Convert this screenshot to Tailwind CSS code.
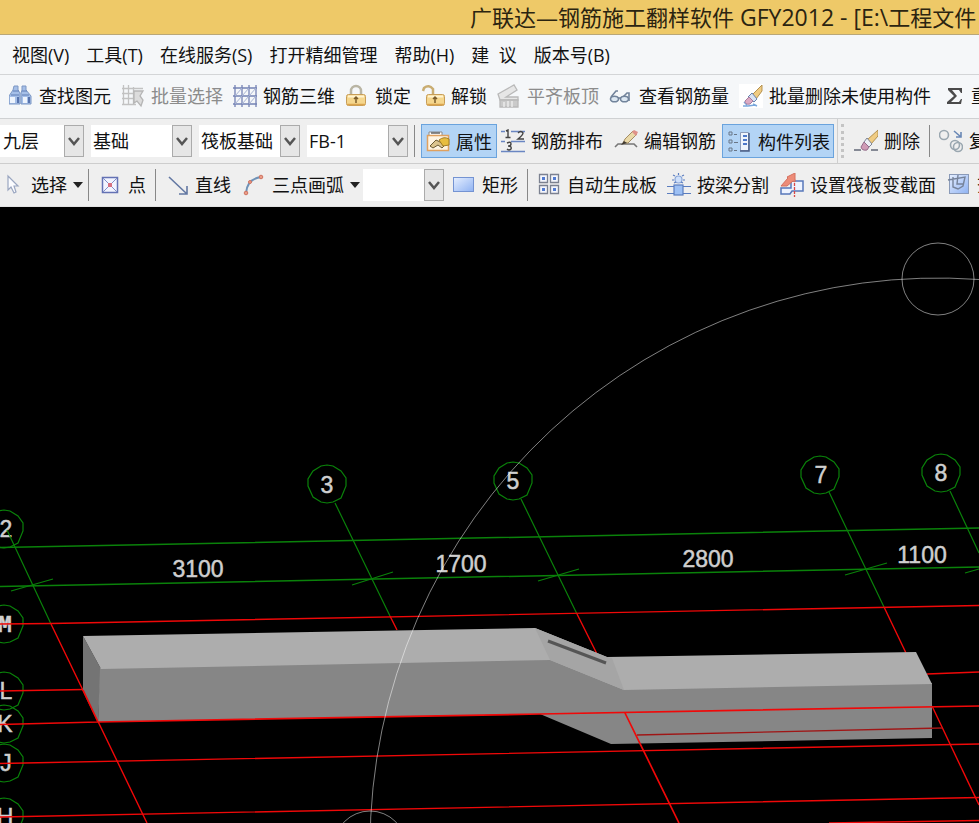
<!DOCTYPE html>
<html lang="zh-CN">

<head>
    <meta charset="utf-8">
    <title>广联达—钢筋施工翻样软件 GFY2012</title>
    <script src="https://cdn.jsdelivr.net/npm/@tailwindcss/browser@4"></script>
</head>

<body class="h-screen flex flex-col overflow-hidden bg-black text-[18px] leading-6 text-[#111] whitespace-nowrap font-['Open_Sans','Noto_Sans_CJK_SC',sans-serif]">

    <!-- title bar -->
    <header class="h-[35px] shrink-0 flex items-center pl-[470px] overflow-hidden bg-[#eec968] border-b border-[#b9a778]">
        <h1 class="text-[22px] leading-8 text-[#2b2410]">广联达—钢筋施工翻样软件<span class="text-[23px]"> GFY2012 - [E:\</span>工程文件</h1>
    </header>

    <!-- menu -->
    <nav class="h-10 shrink-0 flex items-center gap-[17px] pl-3 overflow-hidden bg-[#f5f7f9] border-b border-[#d3d5d7]">
        <button>视图(V)</button>
        <button>工具(T)</button>
        <button>在线服务(S)</button>
        <button>打开精细管理</button>
        <button>帮助(H)</button>
        <button>建&nbsp;&nbsp;议</button>
        <button>版本号(B)</button>
    </nav>

    <!-- toolbar 1 -->
    <div class="h-11 shrink-0 flex items-center gap-[10px] pl-[9px] pb-[2px] overflow-hidden bg-[#f5f7f9] border-b border-[#cfd1d3]">
        <button class="flex shrink-0 items-center gap-[6px]">
            <svg class="size-6" viewBox="0 0 24 24" stroke="#7c97c4" stroke-width="1">
                <path d="M5 2h4v4l2 3v11H0v-8l4-6z" fill="#a5bfe8" />
                <path d="M13 2h4v4l5 6v8H12V9l1-3z" fill="#a5bfe8" />
                <path d="M4 7h6M13 7h5M2 11h8M13 11h7" stroke="#5e7db4" />
                <path d="M1 13h5v6H1zM14 13h4v6h-4z" fill="#eef4fd" stroke="none" />
                <path d="M9 13v6M20 13v6" stroke="#5773ad" stroke-width="2" />
            </svg>
            <span>查找图元</span>
        </button>
        <button class="flex shrink-0 items-center gap-[6px] text-[#8c8c8c]" disabled>
            <svg class="size-6" viewBox="0 0 24 24" fill="none" stroke="#c2c2c2" stroke-width="1.300">
                <path d="M2.500 1v20M7.500 1v20M12.500 3v17M1 4.500h21M1 9.500h12M1 14.500h12M1 20.500h14" />
                <path d="M13 7h9l-3 5 3 4-2 6-4-5-3 2z" fill="#dcdcdc" stroke="#b5b5b5" />
            </svg>
            <span>批量选择</span>
        </button>
        <button class="flex shrink-0 items-center gap-[6px]">
            <svg class="size-6" viewBox="0 0 24 24" fill="none" stroke="#7382b4" stroke-width="1.300">
                <path d="M2 1v22M9 1v22M16 1v22M23 1v22M0 4h24M0 12h24M0 20h24" />
                <path d="M2 12l7-8M9 12l7-8M16 12l7-8M2 20l7-8M9 20l7-8M16 20l7-8" stroke="#a7b3d3" stroke-width="1" />
            </svg>
            <span>钢筋三维</span>
        </button>
        <button class="flex shrink-0 items-center gap-[6px]">
            <svg class="size-6" viewBox="0 0 24 24">
                <path d="M6 11V7a5 5 0 0 1 10 0v4" fill="none" stroke="#b9b5a4" stroke-width="2.500" />
                <rect x="1.500" y="10.500" width="19" height="11" rx="2" fill="#f5d68d" stroke="#c79d58" />
                <path d="M3 12.500h16" stroke="#fff3cf" stroke-width="2" />
                <path d="M2 20.500h18" stroke="#dba44e" stroke-width="1.500" />
                <path d="M11 13v6M9 15l2-2 2 2" fill="none" stroke="#7b5d2c" stroke-width="1.500" />
            </svg>
            <span>锁定</span>
        </button>
        <button class="flex shrink-0 items-center gap-[6px]">
            <svg class="size-6" viewBox="0 0 24 24">
                <path d="M2 7l1-3q5-4 9 1v6" fill="none" stroke="#c9ad72" stroke-width="2.500" />
                <rect x="5.500" y="10.500" width="18" height="11" rx="2" fill="#f5d68d" stroke="#c79d58" />
                <path d="M7 12.500h15" stroke="#fff3cf" stroke-width="2" />
                <path d="M6 20.500h17" stroke="#dba44e" stroke-width="1.500" />
                <path d="M14 13v6M12 15l2-2 2 2" fill="none" stroke="#7b5d2c" stroke-width="1.500" />
            </svg>
            <span>解锁</span>
        </button>
        <button class="flex shrink-0 items-center gap-[6px] text-[#8c8c8c]" disabled>
            <svg class="size-6" viewBox="0 0 24 24" stroke="#b9b9b9" stroke-width="1.300">
                <path d="M1 10L17 1l3 5-11 7h12v3H3z" fill="#e6e6e6" />
                <path d="M3 16h18v7H3z" fill="#cacaca" />
                <path d="M7 18v5M11 17v6M15 17v6" stroke="#f0f0f0" />
            </svg>
            <span>平齐板顶</span>
        </button>
        <button class="flex shrink-0 items-center gap-[6px]">
            <svg class="size-6" viewBox="0 0 24 24" fill="#dce7f2" stroke="#71839b" stroke-width="1.600">
                <path d="M2 13l5-6h2M13 14l5-5h2v8" fill="none" />
                <ellipse cx="5.500" cy="15" rx="4" ry="2.800" />
                <ellipse cx="15.500" cy="15" rx="4" ry="2.800" />
                <path d="M9 14h3" />
            </svg>
            <span>查看钢筋量</span>
        </button>
        <button class="flex shrink-0 items-center gap-[6px]">
            <svg class="size-6 bg-white" viewBox="0 0 24 24">
                <path d="M5 18l3 3M9 22l7-1M14 20l4 2M4 22h5" stroke="#79a7dc" stroke-width="1.500" />
                <path d="M23 1v6l-6 8-4-4z" fill="#f0cc83" stroke="#b3904f" />
                <path d="M13 9l5 6-3 3-6-5z" fill="#d8e3f4" stroke="#6682af" />
                <path d="M10 13l4 4-3 3q-5 1-5-3z" fill="#ddaac3" stroke="#a67d9e" />
            </svg>
            <span>批量删除未使用构件</span>
        </button>
        <button class="flex shrink-0 items-center gap-[6px]">
            <svg class="size-6" viewBox="0 0 24 24">
                <path d="M7 4h14v5h-1l-2-3h-7l5 6-6 6h8l2-3h1l-1 5H6v-2l7-6-6-6z" fill="#4a4a4a" />
            </svg>
            <span>重</span>
        </button>
    </div>

    <!-- toolbar 2 -->
    <div class="h-[45px] shrink-0 flex items-center overflow-hidden bg-[#efefef] border-b border-[#cdcdcd]">
        <div class="flex shrink-0 gap-[7px]">
            <div class="relative w-[84px]">
                <select aria-label="楼层" class="appearance-none block w-full h-8 pl-[3px] bg-white"><option>九层</option></select>
                <span class="absolute right-0 top-0 h-8 w-5 grid place-items-center bg-[#e6e6e6] border border-[#ababab] pointer-events-none">
                    <svg class="w-3 h-3" viewBox="0 0 12 12"><path d="M1 3l5 6 5-6" fill="none" stroke="#555" stroke-width="2.500" /></svg>
                </span>
            </div>
            <div class="relative w-[101px]">
                <select aria-label="构件类别" class="appearance-none block w-full h-8 pl-[2px] bg-white"><option>基础</option></select>
                <span class="absolute right-0 top-0 h-8 w-5 grid place-items-center bg-[#e6e6e6] border border-[#ababab] pointer-events-none">
                    <svg class="w-3 h-3" viewBox="0 0 12 12"><path d="M1 3l5 6 5-6" fill="none" stroke="#555" stroke-width="2.500" /></svg>
                </span>
            </div>
            <div class="relative w-[101px]">
                <select aria-label="构件类型" class="appearance-none block w-full h-8 pl-[2px] bg-white"><option>筏板基础</option></select>
                <span class="absolute right-0 top-0 h-8 w-5 grid place-items-center bg-[#e6e6e6] border border-[#ababab] pointer-events-none">
                    <svg class="w-3 h-3" viewBox="0 0 12 12"><path d="M1 3l5 6 5-6" fill="none" stroke="#555" stroke-width="2.500" /></svg>
                </span>
            </div>
            <div class="relative w-[101px]">
                <select aria-label="构件名称" class="appearance-none block w-full h-8 pl-[2px] bg-white"><option>FB-1</option></select>
                <span class="absolute right-0 top-0 h-8 w-5 grid place-items-center bg-[#e6e6e6] border border-[#ababab] pointer-events-none">
                    <svg class="w-3 h-3" viewBox="0 0 12 12"><path d="M1 3l5 6 5-6" fill="none" stroke="#555" stroke-width="2.500" /></svg>
                </span>
            </div>
        </div>
        <div class="w-px h-8 shrink-0 mx-[6px] bg-[#888]"></div>
        <button class="flex shrink-0 items-center gap-[6px] h-[34px] px-1 pt-[2px] bg-[#b3d4f5] border border-[#6aa3dd]">
            <svg class="size-6" viewBox="0 0 24 24">
                <path d="M3 2h13v4H3z" fill="#fff" stroke="#8a8a8a" />
                <path d="M1.500 5.500h21v15h-21z" fill="#fff4e2" stroke="#e0a15f" stroke-width="1.500" />
                <path d="M5 3h9" stroke="#666" stroke-width="1.500" />
                <path d="M4 16l6-6 4 2 4 4-2 2-4-3-5 3z" fill="#dcc48e" stroke="#6b5a34" />
                <path d="M13 10q5-4 10-1v6l-6 1z" fill="#e8bd3f" stroke="#a17c25" />
            </svg>
            <span>属性</span>
        </button>
        <button class="flex shrink-0 items-center gap-[6px] ml-1">
            <svg class="size-6" viewBox="0 0 24 24" fill="none">
                <path d="M0 2.500h4M10 2.500h14M0 12.500h4M10 12.500h14M0 22.500h24" stroke="#6a86c2" stroke-width="1.300" />
                <path d="M5 2l2-1v7M4.500 8.500h5M17 4q3-3 5 0 0 2-5 6h6M6 14q4-2 4 1 0 2-3 2 4 0 3 3-2 2-4 0" stroke="#444" stroke-width="1.400" />
            </svg>
            <span>钢筋排布</span>
        </button>
        <button class="flex shrink-0 items-center gap-[6px] ml-[11px]">
            <svg class="size-6" viewBox="0 0 24 24">
                <path d="M1 18l3-3h16l3 3" fill="none" stroke="#777" stroke-width="1.600" />
                <path d="M9 14l2-4 8-8 4 3-9 9z" fill="#ead9a8" stroke="#a38c62" />
                <path d="M18 3l2-2 4 2-2 4z" fill="#df9189" />
                <path d="M7 16l3-4 3 2z" fill="#413a31" />
            </svg>
            <span>编辑钢筋</span>
        </button>
        <button class="flex shrink-0 items-center gap-[6px] h-[34px] ml-[6px] pl-[5px] pr-[3px] pt-[2px] bg-[#b3d4f5] border border-[#6aa3dd]">
            <svg class="size-6" viewBox="0 0 24 24" fill="none">
                <path d="M1 2h3v3H1zM1 10h3v3H1zM1 18h3v3H1zM6 4.500h3M6 12.500h4M6 20.500h3" stroke="#697687" />
                <path d="M12.500 2.500h8v18h-8z" fill="#eef4fc" stroke="#8c9cb9" />
                <path d="M21 3v18h-9" stroke="#4b5f86" stroke-width="1.500" />
                <path d="M15 6h4M15 10h4M15 14h4" stroke="#4d78c8" stroke-width="1.800" />
            </svg>
            <span>构件列表</span>
        </button>
        <div class="w-px h-11 shrink-0 ml-[3px] bg-[#cfcfcf]"></div>
        <div class="h-[34px] w-[3px] shrink-0 ml-[3px] border-l-[3px] border-dotted border-[#c4c4c4]"></div>
        <button class="flex shrink-0 items-center gap-[6px] ml-[10px]">
            <svg class="size-6" viewBox="0 0 24 24">
                <path d="M0 21h7M17 21h7" stroke="#858995" stroke-width="2" />
                <path d="M24 1v6l-7 8-4-4z" fill="#f0cc83" stroke="#b3904f" />
                <path d="M13 9l5 6-3 3-5-5z" fill="#eceff5" stroke="#7c8597" />
                <path d="M10 13l5 5-2 3q-5 1-6-3z" fill="#cf9bb6" stroke="#936b8a" />
            </svg>
            <span>删除</span>
        </button>
        <div class="w-px h-8 shrink-0 mx-[9px] bg-[#888]"></div>
        <button class="flex shrink-0 items-center gap-[6px]">
            <svg class="size-6" viewBox="0 0 24 24" fill="none" stroke="#9aa7b0" stroke-width="1.600">
                <circle cx="5" cy="6" r="4.500" />
                <circle cx="16" cy="16" r="4.500" />
                <circle cx="19" cy="18" r="4.500" />
                <path d="M15 2l7 6M22 3v5h-5" stroke="#6987b5" />
            </svg>
            <span>复</span>
        </button>
    </div>

    <!-- toolbar 3 -->
    <div class="h-[43px] shrink-0 flex items-center overflow-hidden bg-[#efefef] border-b border-[#e2e2e2]">
        <button class="flex shrink-0 items-center gap-[6px] pl-[1px]">
            <svg class="size-6" viewBox="0 0 24 24">
                <path d="M7 3v14l3-3 3 6 2-1-2-6h4z" fill="#fbfcff" stroke="#9aa6c0" stroke-width="1.200" />
            </svg>
            <span>选择</span>
            <svg class="w-[10px] h-[6px]" viewBox="0 0 10 6"><path d="M0 0h10L5 6z" fill="#222" /></svg>
        </button>
        <div class="w-px h-8 shrink-0 ml-[5px] mr-[9px] bg-[#888]"></div>
        <button class="flex shrink-0 items-center gap-[6px]">
            <svg class="size-6" viewBox="0 0 24 24" fill="none">
                <path d="M4.500 4.500h15v15h-15z" fill="#f2f4ff" stroke="#6472b4" stroke-width="1.500" />
                <path d="M5 5l14 14M19 5L5 19" stroke="#8290c5" />
                <path d="M10 10h4v4h-4z" fill="#d67181" />
            </svg>
            <span>点</span>
        </button>
        <div class="w-px h-8 shrink-0 mx-[9px] bg-[#888]"></div>
        <button class="flex shrink-0 items-center gap-[6px]">
            <svg class="size-6" viewBox="0 0 24 24" fill="none" stroke="#6378a3" stroke-width="1.600">
                <path d="M4 4l18 17M22 13v8h-8" />
            </svg>
            <span>直线</span>
        </button>
        <button class="flex shrink-0 items-center gap-[6px] ml-[11px]">
            <svg class="size-6" viewBox="0 0 24 24" fill="#eb9c87" stroke="#cf7461">
                <path d="M4 20q1-14 15-16" fill="none" stroke="#6f92b7" stroke-width="2" />
                <circle cx="4" cy="20" r="1.800" />
                <circle cx="8" cy="9" r="1.500" />
                <circle cx="19" cy="4" r="1.800" />
            </svg>
            <span>三点画弧</span>
            <svg class="w-[10px] h-[6px]" viewBox="0 0 10 6"><path d="M0 0h10L5 6z" fill="#222" /></svg>
        </button>
        <div class="relative w-[81px] shrink-0 ml-[3px]">
            <select aria-label="画弧方式" class="appearance-none block w-full h-8 bg-white"><option></option></select>
            <span class="absolute right-0 top-0 h-8 w-5 grid place-items-center bg-[#e6e6e6] border border-[#ababab] pointer-events-none">
                <svg class="w-3 h-3" viewBox="0 0 12 12"><path d="M1 3l5 6 5-6" fill="none" stroke="#555" stroke-width="2.500" /></svg>
            </span>
        </div>
        <button class="flex shrink-0 items-center gap-[6px] ml-[8px]">
            <svg class="size-6" viewBox="0 0 24 24">
                <defs>
                    <linearGradient id="blue" x1="0" y1="0" x2="1" y2="1">
                        <stop stop-color="#e6efff" />
                        <stop offset="1" stop-color="#8fb2f2" />
                    </linearGradient>
                </defs>
                <rect x="1.500" y="4.500" width="20" height="14" fill="url(#blue)" stroke="#7493d2" />
            </svg>
            <span>矩形</span>
        </button>
        <div class="w-px h-8 shrink-0 mx-[9px] bg-[#888]"></div>
        <button class="flex shrink-0 items-center gap-[6px]">
            <svg class="size-6" viewBox="0 0 24 24">
                <path d="M2.500 1.500h8v8h-8zM13.500 1.500h8v8h-8zM2.500 12.500h8v8h-8zM13.500 12.500h8v8h-8z" fill="#f4f6fc" stroke="#7b8190" stroke-width="1.300" />
                <path d="M5 4h3v3H5zM16 4h3v3h-3zM5 15h3v3H5zM16 15h3v3h-3z" fill="#527bd1" />
            </svg>
            <span>自动生成板</span>
        </button>
        <button class="flex shrink-0 items-center gap-[6px] ml-[10px]">
            <svg class="size-6" viewBox="0 0 24 24" stroke="#5a7dbf" stroke-width="1.200">
                <path d="M0 13.500h24M0 20.500h24" />
                <rect x="7" y="12" width="9" height="10" fill="#9dc0f4" />
                <circle cx="11.500" cy="6.500" r="3.500" fill="#cfe0fa" stroke="#8aa6d8" />
                <path d="M11.500 0v2M6 2l2 1M17 2l-2 1M5 7h2M16 7h2M7 10l2-1M16 10l-2-1" />
            </svg>
            <span>按梁分割</span>
        </button>
        <button class="flex shrink-0 items-center gap-[6px] ml-[11px]">
            <svg class="size-6" viewBox="0 0 24 24">
                <path d="M1 15h10V8h12v10H12l-2 3H1z" fill="#eef3ff" stroke="#5878bb" stroke-width="1.500" />
                <path d="M14.500 6v18" stroke="#d94848" stroke-width="1.300" stroke-dasharray="3 1" />
                <path d="M1 13l7-8-1-1 8-4v9l-2-1-6 5z" fill="#ed8c78" stroke="#d4705f" />
            </svg>
            <span>设置筏板变截面</span>
        </button>
        <button class="flex shrink-0 items-center gap-[6px] ml-[11px]">
            <svg class="size-6" viewBox="0 0 24 24">
                <rect x="2.500" y="1.500" width="19" height="19" fill="url(#blue)" stroke="#8a9ab8" />
                <path d="M1 7l17-3-2 9-5 3-5-2V4M11 2l-1 9h6" fill="none" stroke="#76839a" stroke-width="1.400" />
            </svg>
            <span>查</span>
        </button>
    </div>

    <!-- 3d view -->
    <main class="flex-1 min-h-0 bg-black">
        <svg class="block w-full h-full" viewBox="0 207 979 616" preserveAspectRatio="xMinYMin slice" fill="none">
            <defs>
                <path id="axis" d="M0-19l6 1 8 5 5 7v8l-5 12-8 4-6 1-6-1-8-5-5-11v-7l5-8 8-5z" />
            </defs>

            <!-- dimensions and axis names -->
            <g fill="#cfcfcf" stroke="#cfcfcf" stroke-width=".5" font-family="Liberation Sans, sans-serif" font-size="23" text-anchor="middle">
                <text x="198" y="577">3100</text>
                <text x="461" y="572">1700</text>
                <text x="708" y="567">2800</text>
                <text x="922" y="563">1100</text>
                <text x="6" y="537">2</text>
                <text x="327" y="493">3</text>
                <text x="513" y="489">5</text>
                <text x="821" y="483">7</text>
                <text x="941" y="481">8</text>
                <text x="6" y="699">L</text>
                <text x="5" y="732">K</text>
                <text x="6" y="771">J</text>
                <text x="5" y="825">H</text>
                <text x="5" y="632" font-family="Liberation Mono, monospace" font-weight="bold">M</text>
            </g>

            <g stroke="#0a820a" stroke-width="1.200">
                <use href="#axis" x="4" y="529" />
                <use href="#axis" x="327" y="484" />
                <use href="#axis" x="513" y="481" />
                <use href="#axis" x="820" y="475" />
                <use href="#axis" x="941" y="473" />
                <use href="#axis" x="4" y="624" />
                <use href="#axis" x="4" y="691" />
                <use href="#axis" x="4" y="724" />
                <use href="#axis" x="4" y="763" />
                <use href="#axis" x="4" y="817" />
                <path d="M0 547.500L979 528M0 586.500L979 567" stroke-width="1.500" />
                <path d="M7 530L51 624M335 503L390 616M521 499L577 614M829 492L884 607M950 491L979 553" />
                <path d="M11 591L53 579M352 585L393 572M538 581L579 569M845 575L887 563M965 573L979 569" />
            </g>
            <g stroke="#f00808" stroke-width="1.400">
                <path d="M0 624L51 623.500 979 605.500M0 691L84 689.500M927 674L979 672M0 763.500L979 744M0 817L979 797.500M829 823L979 820.500" />
                <path d="M51 624L147 823M390 616L397 630M577 614L597 654M884 607L906 653M932 706L979 805" />
            </g>

            <!-- slab -->
            <g>
                <path d="M83 636L101 669 98 722 83 690z" fill="#747474" />
                <path d="M100 668L550 659 624 689 932 683V738L611 744 540 714 98 722z" fill="#868686" />
                <path d="M83 636L535 628 607 657 916 652 932 684 624 690 550 660 101 669z" fill="#adadad" />
                <path d="M535 628L607 657 612 658 624 690 550 660z" fill="#a5a5a5" />
                <path d="M548 641L606 663" stroke="#555" stroke-width="3" />
                <path d="M637 735L942 728" stroke="#a01515" stroke-width="1.400" />
                <path d="M0 724.500L98 722 540 714 979 706M625 713L679 823M83 690L98 722" stroke="#f00808" stroke-width="1.700" />
            </g>

            <!-- orbit -->
            <g stroke="#fff" stroke-opacity=".5">
                <path d="M370 846A568 568 0 0 1 979 279.500" />
                <circle cx="938" cy="279" r="36" />
                <circle cx="370" cy="847" r="36" />
            </g>
        </svg>
    </main>

</body>

</html>
